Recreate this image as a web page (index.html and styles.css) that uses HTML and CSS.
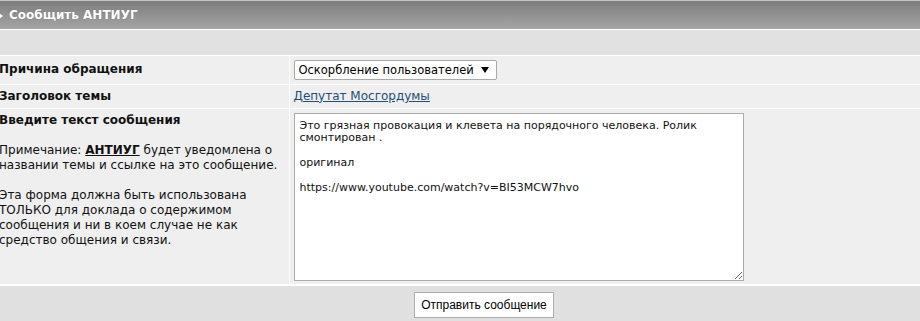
FILE: index.html
```html
<!DOCTYPE html>
<html lang="ru">
<head>
  <meta charset="UTF-8">
  <title>Сообщить АНТИУГ</title>
  <link rel="stylesheet" href="styles.css">
</head>
<body>
  <div class="page">
    <div class="cat-head"><span class="cat-arrow"></span>Сообщить АНТИУГ</div>
    <div class="cat-band"></div>

    <table class="report-form">
      <tr>
        <td class="label-cell"><b>Причина обращения</b></td>
        <td class="field-cell select-row">
          <div class="select-wrap">
            <select class="reason">
              <option>Оскорбление пользователей</option>
            </select>
          </div>
        </td>
      </tr>
      <tr class="topic-row">
        <td class="label-cell"><b>Заголовок темы</b></td>
        <td class="field-cell"><a href="#" class="topic-link">Депутат Мосгордумы</a></td>
      </tr>
      <tr class="last-row">
        <td class="label-cell top">
          <b>Введите текст сообщения</b>
          <p class="note">Примечание: <a href="#" class="mod-link">АНТИУГ</a> будет уведомлена о названии темы и ссылке на это сообщение.</p>
          <p class="note">Эта форма должна быть использована ТОЛЬКО для доклада о содержимом сообщения и ни в коем случае не как средство общения и связи.</p>
        </td>
        <td class="field-cell top">
          <textarea class="message">Это грязная провокация и клевета на порядочного человека. Ролик смонтирован .

оригинал

https://www.youtube.com/watch?v=BI53MCW7hvo</textarea>
        </td>
      </tr>
    </table>

    <div class="form-foot">
      <button type="button" class="submit-btn">Отправить сообщение</button>
    </div>
  </div>
</body>
</html>
```

FILE: styles.css
```css
/* Reset */
html, body {
  margin: 0;
  padding: 0;
  background: #fff;
  overflow: hidden;
}

body {
  font-family: "DejaVu Sans", Verdana, sans-serif;
  font-size: 12px;
  color: #111;
}

/* page is wider than the window, so it is cut on both sides */
.page {
  width: 978px;
  margin-left: -5px;
}

.cat-head {
  height: 28px;
  border-top: 1px solid #c4c4c4;
  border-bottom: 1px solid #fff;
  background: linear-gradient(#7d7d7d, #a5a5a5);
  color: #fff;
  font-weight: bold;
  font-size: 12px;
  line-height: 28px;
  display: flex;
  align-items: center;
  text-shadow: 0 0 1px rgba(0, 0, 0, 0.25);
}

.cat-arrow {
  width: 0;
  height: 0;
  border-left: 4px solid #fff;
  border-top: 3px solid transparent;
  border-bottom: 3px solid transparent;
  margin: 1px 6px 0 4px;
}

.cat-band {
  height: 25px;
  background: #e1e1e1;
  border-bottom: 1px solid #fff;
}

.report-form {
  width: 100%;
  border-collapse: collapse;
  table-layout: fixed;
}

.report-form td {
  background: #efefef;
  border-bottom: 1px solid #fff;
  box-sizing: border-box;
  padding: 3px 4px;
  vertical-align: middle;
}

.report-form .topic-row td {
  padding: 0 4px;
  height: 24px;
  line-height: 23px;
}

.report-form .last-row td {
  border-bottom: 2px solid #fff;
  padding: 4px 4px 3px;
}

.label-cell {
  width: 294px;
  border-right: 1px solid #fff;
  line-height: 15px;
}

.label-cell b {
  font-size: 12px;
}

.select-row {
  height: 28px;
}

.top {
  vertical-align: top !important;
}

.note {
  margin: 15px 0 0;
  line-height: 15px;
}

.mod-link {
  color: #111;
  font-weight: bold;
}

.topic-link {
  color: #1f4e79;
}

.select-wrap {
  position: relative;
  display: inline-block;
}

.select-wrap::after {
  content: "";
  position: absolute;
  right: 8px;
  top: 7px;
  border-top: 6px solid #000;
  border-left: 4px solid transparent;
  border-right: 4px solid transparent;
  pointer-events: none;
}

.reason {
  appearance: none;
  -webkit-appearance: none;
  width: 203px;
  height: 20px;
  padding: 0 0 0 4px;
  border: 1px solid #a9a9a9;
  border-radius: 2px;
  background: #fff;
  font-family: "DejaVu Sans", Verdana, sans-serif;
  font-size: 11.5px;
  color: #000;
  display: block;
}

.message {
  display: block;
  box-sizing: border-box;
  width: 450px;
  height: 168px;
  margin: 0;
  padding: 6px 5px;
  border: 1px solid #ababab;
  background: #fff;
  font-family: "DejaVu Sans", Verdana, sans-serif;
  font-size: 11px;
  line-height: 12.4px;
  color: #111;
}

.form-foot {
  background: #e0e0e0;
  padding: 6px 0 6px;
  text-align: center;
}

.submit-btn {
  height: 26px;
  padding: 0 6px;
  background: #fff;
  border: 1px solid #adadad;
  font-family: "Liberation Sans", Arial, sans-serif;
  font-size: 12px;
  color: #000;
}
```
